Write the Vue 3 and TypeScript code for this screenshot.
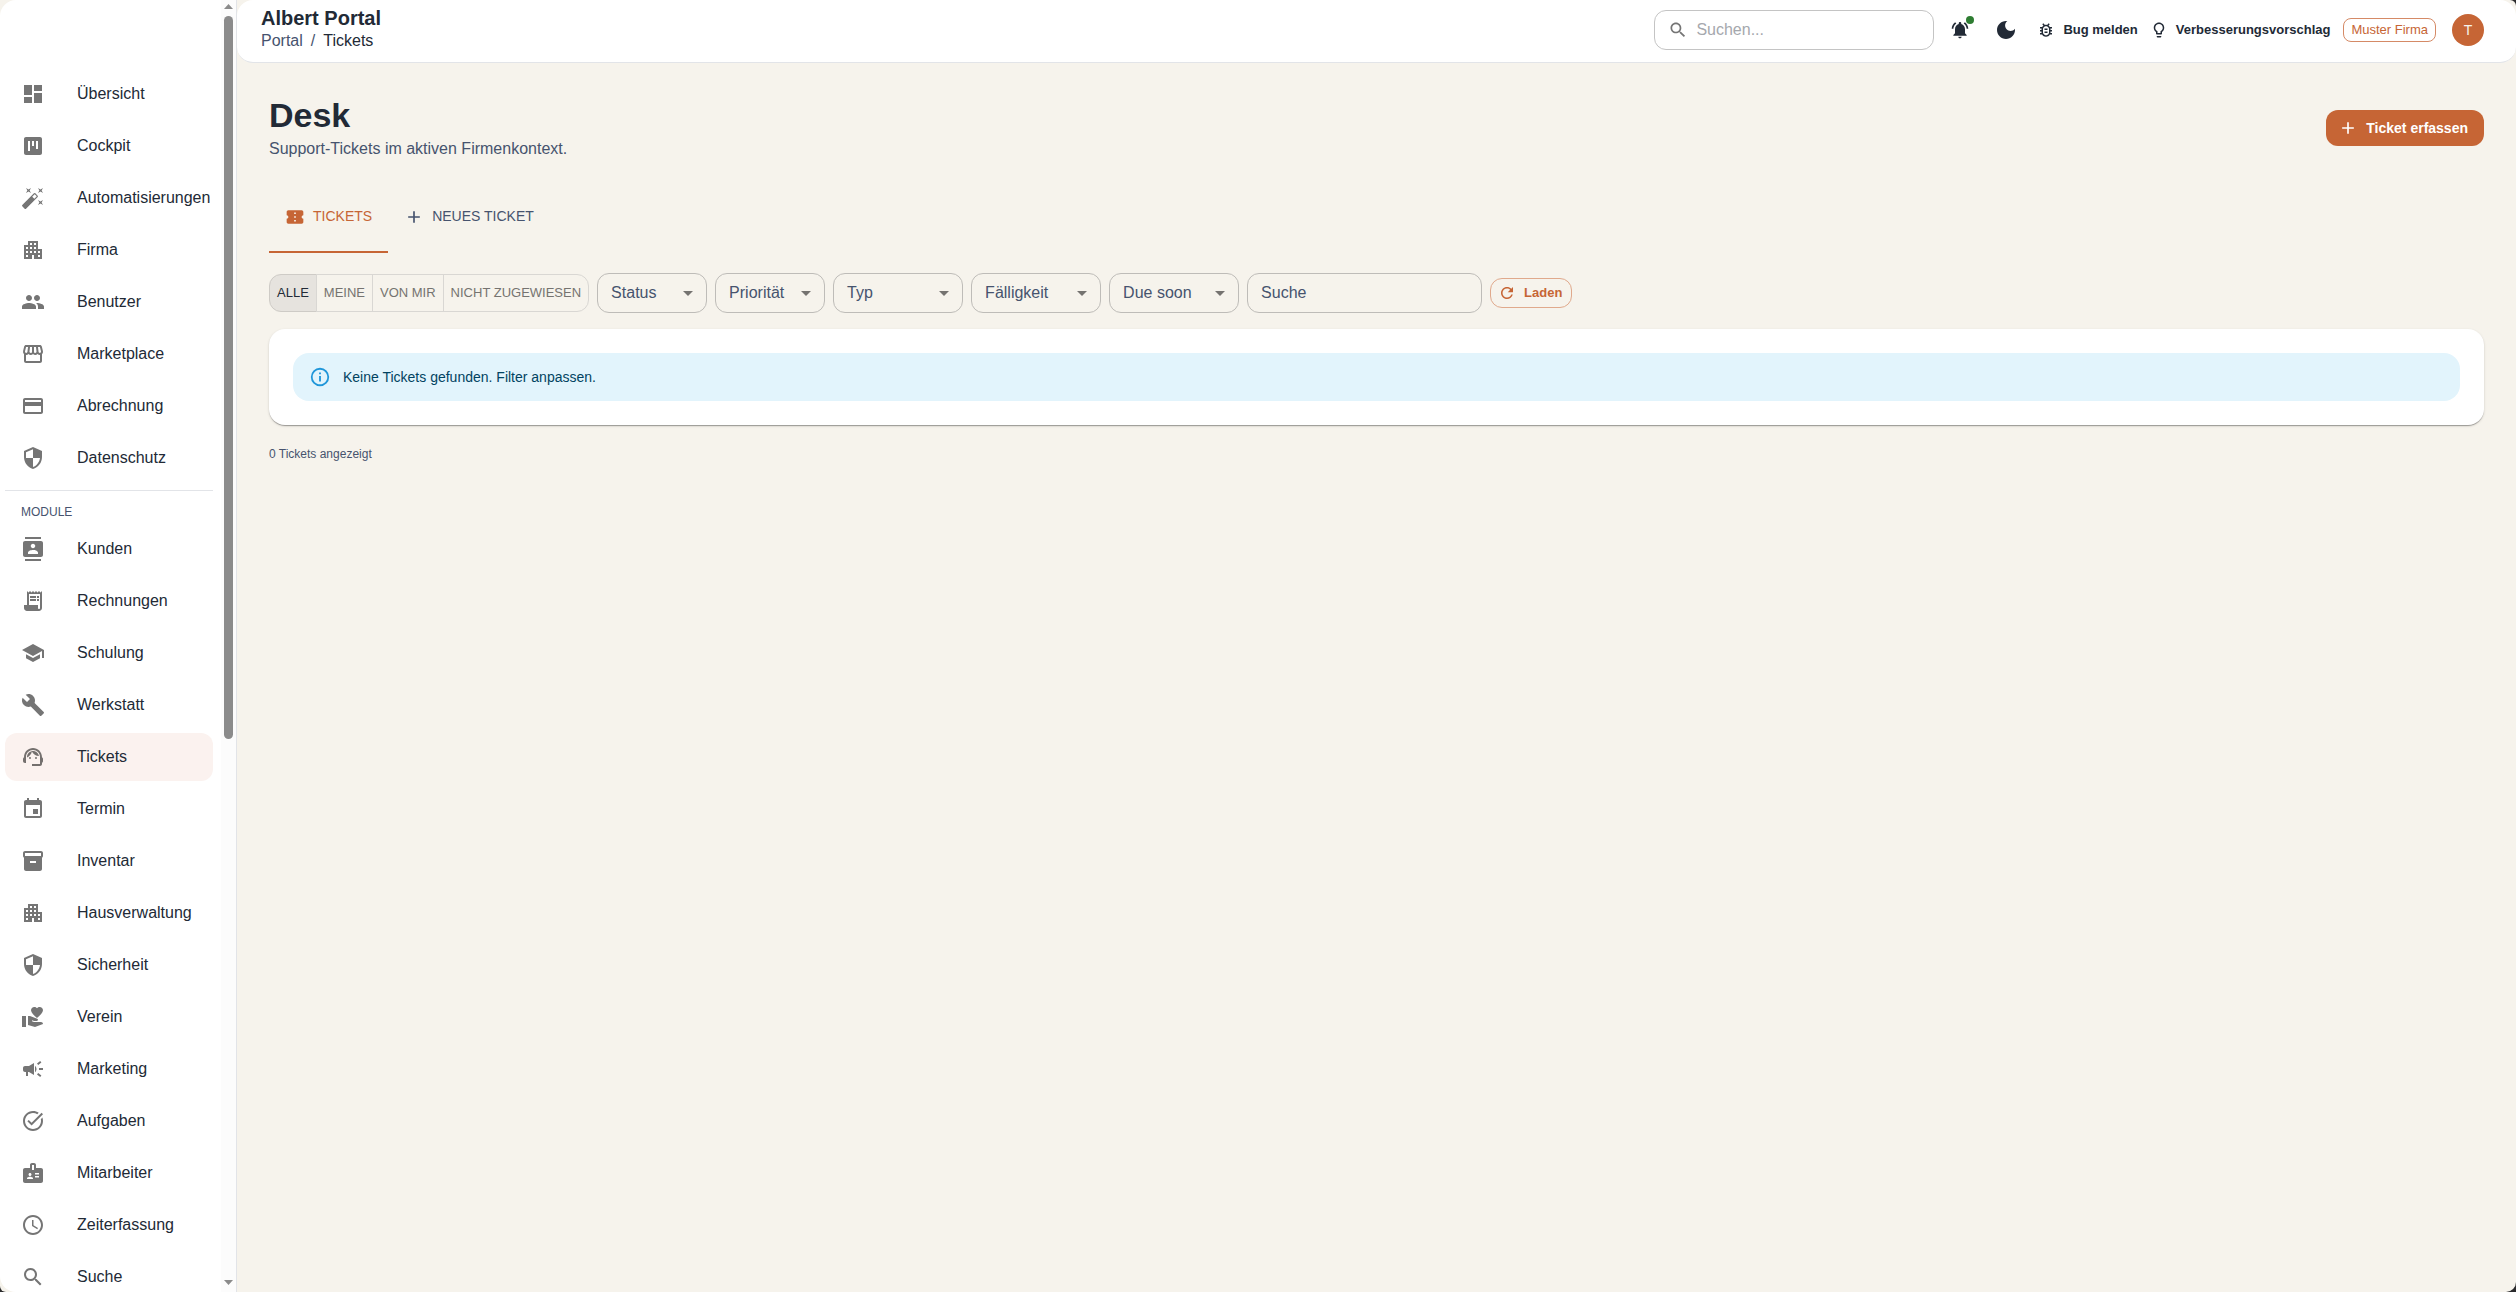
<script setup lang="ts">
interface NavItem {
  label: string
  icon: string
  active?: boolean
}

const icons: Record<string, string> = {
  dashboard: 'M3 13h8V3H3v10zm0 8h8v-6H3v6zm10 0h8V11h-8v10zm0-18v6h8V3h-8z',
  kanban: 'M19 3H5c-1.1 0-2 .9-2 2v14c0 1.1.9 2 2 2h14c1.1 0 2-.9 2-2V5c0-1.1-.9-2-2-2zM9 17H7V7h2v10zm4-5h-2V7h2v5zm4 3h-2V7h2v8z',
  wand: 'M7.5 5.6 10 7 8.6 4.5 10 2 7.5 3.4 5 2l1.4 2.5L5 7zm12 9.8L17 14l1.4 2.5L17 19l2.5-1.4L22 19l-1.4-2.5L22 14zM22 2l-2.5 1.4L17 2l1.4 2.5L17 7l2.5-1.4L22 7l-1.4-2.5zm-7.63 5.29a.9959.9959 0 0 0-1.41 0L1.29 18.96c-.39.39-.39 1.02 0 1.41l2.34 2.34c.39.39 1.02.39 1.41 0L16.7 11.05c.39-.39.39-1.02 0-1.41l-2.33-2.35zm-1.03 5.49-2.12-2.12 2.44-2.44 2.12 2.12-2.44 2.44z',
  apartment: 'M17 11V3H7v4H3v14h8v-4h2v4h8V11h-4zM7 19H5v-2h2v2zm0-4H5v-2h2v2zm0-4H5V9h2v2zm4 4H9v-2h2v2zm0-4H9V9h2v2zm0-4H9V5h2v2zm4 8h-2v-2h2v2zm0-4h-2V9h2v2zm0-4h-2V5h2v2zm4 12h-2v-2h2v2zm0-4h-2v-2h2v2z',
  people: 'M16 11c1.66 0 2.99-1.34 2.99-3S17.66 5 16 5c-1.66 0-3 1.34-3 3s1.34 3 3 3zm-8 0c1.66 0 2.99-1.34 2.99-3S9.66 5 8 5C6.34 5 5 6.34 5 8s1.34 3 3 3zm0 2c-2.33 0-7 1.17-7 3.5V19h14v-2.5c0-2.33-4.67-3.5-7-3.5zm8 0c-.29 0-.62.02-.97.05 1.16.84 1.97 1.97 1.97 3.45V19h6v-2.5c0-2.33-4.67-3.5-7-3.5z',
  storefront: 'M21.9 8.89l-1.05-4.37c-.22-.9-1-1.52-1.91-1.52H5.05c-.9 0-1.69.63-1.9 1.52L2.1 8.89c-.24 1.02-.02 2.06.62 2.88.08.11.19.19.28.29V19c0 1.1.9 2 2 2h14c1.1 0 2-.9 2-2v-6.94c.09-.09.2-.18.28-.28.64-.82.87-1.87.62-2.89zm-2.99-3.9l1.05 4.37c.1.42.01.84-.25 1.17-.14.18-.44.47-.94.47-.61 0-1.14-.49-1.21-1.14L16.98 5l1.93-.01zM13 5h1.96l.54 4.52c.05.39-.07.78-.33 1.07-.22.26-.54.41-.95.41-.67 0-1.22-.59-1.22-1.31V5zM8.49 9.52L9.04 5H11v4.69c0 .72-.55 1.31-1.29 1.31-.34 0-.65-.15-.89-.41-.25-.29-.37-.68-.33-1.07zm-4.45-.16L5.05 5h1.97l-.58 4.86c-.08.65-.6 1.14-1.21 1.14-.49 0-.8-.29-.93-.47-.27-.32-.36-.75-.26-1.17zM5 19v-6.03c.08.01.15.03.23.03.87 0 1.66-.36 2.24-.95.6.6 1.4.95 2.31.95.87 0 1.65-.36 2.23-.93.59.57 1.39.93 2.29.93.84 0 1.64-.35 2.24-.95.58.59 1.37.95 2.24.95.08 0 .15-.02.23-.03V19H5z',
  card: 'M20 4H4c-1.11 0-1.99.89-1.99 2L2 18c0 1.11.89 2 2 2h16c1.11 0 2-.89 2-2V6c0-1.11-.89-2-2-2zm0 14H4v-6h16v6zm0-10H4V6h16v2z',
  security: 'M12 1 3 5v6c0 5.55 3.84 10.74 9 12 5.16-1.26 9-6.45 9-12V5l-9-4zm0 10.99h7c-.53 4.12-3.28 7.79-7 8.94V12H5V6.3l7-3.11v8.8z',
  contacts: 'M20 0H4v2h16V0zM4 24h16v-2H4v2zM20 4H4c-1.1 0-2 .9-2 2v12c0 1.1.9 2 2 2h16c1.1 0 2-.9 2-2V6c0-1.1-.9-2-2-2zm-8 2.75c1.24 0 2.25 1.01 2.25 2.25s-1.01 2.25-2.25 2.25S9.75 10.24 9.75 9 10.76 6.75 12 6.75zM17 17H7v-1.5c0-1.67 3.33-2.5 5-2.5s5 .83 5 2.5V17z',
  receipt: 'M19.5 3.5 18 2l-1.5 1.5L15 2l-1.5 1.5L12 2l-1.5 1.5L9 2 7.5 3.5 6 2v14H3v3c0 1.66 1.34 3 3 3h12c1.66 0 3-1.34 3-3V2l-1.5 1.5zM19 19c0 .55-.45 1-1 1s-1-.45-1-1v-3H8V5h11v14zM9 7h6v2H9zm7 0h2v2h-2zm-7 3h6v2H9zm7 0h2v2h-2z',
  school: 'M5 13.18v4L12 21l7-3.82v-4L12 17l-7-3.82zM12 3 1 9l11 6 9-4.91V17h2V9L12 3z',
  build: 'm22.7 19-9.1-9.1c.9-2.3.4-5-1.5-6.9-2-2-5-2.4-7.4-1.3L9 6 6 9 1.6 4.7C.4 7.1.9 10.1 2.9 12.1c1.9 1.9 4.6 2.4 6.9 1.5l9.1 9.1c.4.4 1 .4 1.4 0l2.3-2.3c.5-.4.5-1.1.1-1.4z',
  agent: 'M21 12.22C21 6.73 16.74 3 12 3c-4.69 0-9 3.65-9 9.28-.6.34-1 .98-1 1.72v2c0 1.1.9 2 2 2h1v-6.1c0-3.87 3.13-7 7-7s7 3.13 7 7V19h-8v2h8c1.1 0 2-.9 2-2v-1.22c.59-.31 1-.92 1-1.64v-2.3c0-.7-.41-1.31-1-1.62zM8 13a1 1 0 1 0 2 0a1 1 0 1 0-2 0zM14 13a1 1 0 1 0 2 0a1 1 0 1 0-2 0zM18 11.03C17.52 8.18 15.04 6 12.05 6c-3.03 0-6.29 2.51-6.03 6.45 2.47-1.01 4.33-3.21 4.86-5.89 1.31 2.63 4 4.44 7.12 4.47z',
  event: 'M17 12h-5v5h5v-5zM16 1v2H8V1H6v2H5c-1.11 0-1.99.9-1.99 2L3 19c0 1.1.89 2 2 2h14c1.1 0 2-.9 2-2V5c0-1.1-.9-2-2-2h-1V1h-2zm3 18H5V8h14v11z',
  inventory: 'M20 2H4c-1 0-2 .9-2 2v3.01c0 .72.43 1.34 1 1.69V20c0 1.1 1.1 2 2 2h14c.9 0 2-.9 2-2V8.7c.57-.35 1-.97 1-1.69V4c0-1.1-1-2-2-2zm-5 12H9v-2h6v2zm5-7H4V4h16v3z',
  volunteer: 'M1 11h4v11H1zM16 3.25C16.65 2.49 17.66 2 18.7 2 20.55 2 22 3.45 22 5.3c0 2.27-2.91 4.9-6 7.7-3.09-2.81-6-5.44-6-7.7C10 3.45 11.45 2 13.3 2c1.04 0 2.05.49 2.7 1.25zM20 17h-7l-2.09-.73.33-.94L13 16h2.82c.65 0 1.18-.53 1.18-1.18 0-.49-.31-.93-.77-1.11L8.97 11H7v9.02L14 22l8.01-3c-.01-1.1-.9-2-2.01-2z',
  campaign: 'M18 11v2h4v-2h-4zm-2 6.61c.96.71 2.21 1.65 3.2 2.39.4-.53.8-1.07 1.2-1.6-.99-.74-2.24-1.68-3.2-2.4-.4.54-.8 1.08-1.2 1.61zM20.4 5.6c-.4-.53-.8-1.07-1.2-1.6-.99.74-2.24 1.68-3.2 2.4.4.53.8 1.07 1.2 1.6.96-.72 2.21-1.65 3.2-2.4zM4 9c-1.1 0-2 .9-2 2v2c0 1.1.9 2 2 2h1v4h2v-4h1l5 3V6L8 9H4zm11.5 3c0-1.33-.58-2.53-1.5-3.35v6.69c.92-.81 1.5-2.01 1.5-3.34z',
  task: 'M22 5.18 10.59 16.6l-4.24-4.24 1.41-1.41 2.83 2.83 10-10L22 5.18zm-2.21 5.04c.13.57.21 1.17.21 1.78 0 4.42-3.58 8-8 8s-8-3.58-8-8 3.58-8 8-8c1.58 0 3.04.46 4.28 1.25l1.44-1.44C16.1 2.67 14.13 2 12 2 6.48 2 2 6.48 2 12s4.48 10 10 10 10-4.48 10-10c0-1.19-.22-2.33-.6-3.39l-1.61 1.61z',
  badge: 'M20 7h-5V4c0-1.1-.9-2-2-2h-2c-1.1 0-2 .9-2 2v3H4c-1.1 0-2 .9-2 2v11c0 1.1.9 2 2 2h16c1.1 0 2-.9 2-2V9c0-1.1-.9-2-2-2zM9 12c.83 0 1.5.67 1.5 1.5S9.83 15 9 15s-1.5-.67-1.5-1.5S8.17 12 9 12zm3 6H6v-.75c0-1 2-1.5 3-1.5s3 .5 3 1.5V18zm1-9h-2V4h2v5zm5 7.5h-4V15h4v1.5zm0-3h-4V12h4v1.5z',
  clock: 'M11.99 2C6.47 2 2 6.48 2 12s4.47 10 9.99 10C17.52 22 22 17.52 22 12S17.52 2 11.99 2zM12 20c-4.42 0-8-3.58-8-8s3.58-8 8-8 8 3.58 8 8-3.58 8-8 8zm.5-13H11v6l5.25 3.15.75-1.23-4.5-2.67z',
  search: 'M15.5 14h-.79l-.28-.27C15.41 12.59 16 11.11 16 9.5 16 5.91 13.09 3 9.5 3S3 5.91 3 9.5 5.91 16 9.5 16c1.61 0 3.09-.59 4.23-1.57l.27.28v.79l5 4.99L20.49 19l-4.99-5zm-6 0C7.01 14 5 11.99 5 9.5S7.01 5 9.5 5 14 7.01 14 9.5 11.99 14 9.5 14z',
  bell: 'M7.58 4.08 6.15 2.65C3.75 4.48 2.17 7.3 2.03 10.5h2c.15-2.65 1.51-4.97 3.55-6.42zm12.39 6.42h2c-.15-3.2-1.73-6.02-4.12-7.85l-1.42 1.43c2.02 1.45 3.39 3.77 3.54 6.42zM18 11c0-3.07-1.64-5.64-4.5-6.32V4c0-.83-.67-1.5-1.5-1.5s-1.5.67-1.5 1.5v.68C7.63 5.36 6 7.92 6 11v5l-2 2v1h16v-1l-2-2v-5zm-6 11c.14 0 .27-.01.4-.04.65-.14 1.18-.58 1.44-1.18.1-.24.15-.5.15-.78h-4c.01 1.1.9 2 2.01 2z',
  moon: 'M12 3c-4.97 0-9 4.03-9 9s4.03 9 9 9 9-4.03 9-9c0-.46-.04-.92-.1-1.36-.98 1.37-2.58 2.26-4.4 2.26-2.98 0-5.4-2.42-5.4-5.4 0-1.81.89-3.42 2.26-4.4-.44-.06-.9-.1-1.36-.1z',
  bug: 'M20 8h-2.81c-.45-.78-1.07-1.45-1.82-1.96L17 4.41 15.59 3l-2.17 2.17C12.96 5.06 12.49 5 12 5s-.96.06-1.41.17L8.41 3 7 4.41l1.62 1.63C7.88 6.55 7.26 7.22 6.81 8H4v2h2.09c-.05.33-.09.66-.09 1v1H4v2h2v1c0 .34.04.67.09 1H4v2h2.81c1.04 1.79 2.97 3 5.19 3s4.15-1.21 5.19-3H20v-2h-2.09c.05-.33.09-.66.09-1v-1h2v-2h-2v-1c0-.34-.04-.67-.09-1H20V8zm-4 4v3c0 .22-.03.47-.07.7l-.1.65-.37.65c-.72 1.24-2.04 2-3.46 2s-2.74-.77-3.46-2l-.37-.64-.1-.65C8.03 15.48 8 15.23 8 15v-4c0-.23.03-.48.07-.7l.1-.65.37-.65c.3-.52.72-.97 1.21-1.31l.57-.39.74-.18c.31-.08.63-.12.94-.12.32 0 .63.04.95.12l.68.16.61.42c.5.34.91.78 1.21 1.31l.38.65.1.65c.04.22.07.47.07.69v1zm-6 2h4v2h-4zm0-4h4v2h-4z',
  bulb: 'M9 21c0 .55.45 1 1 1h4c.55 0 1-.45 1-1v-1H9v1zm3-19C8.14 2 5 5.14 5 9c0 2.38 1.19 4.47 3 5.74V17c0 .55.45 1 1 1h6c.55 0 1-.45 1-1v-2.26c1.81-1.27 3-3.36 3-5.74 0-3.86-3.14-7-7-7zm2.85 11.1-.85.6V16h-4v-2.3l-.85-.6C7.8 12.16 7 10.63 7 9c0-2.76 2.24-5 5-5s5 2.24 5 5c0 1.63-.8 3.16-2.15 4.1z',
  ticket: 'M22 10V6c0-1.11-.9-2-2-2H4c-1.1 0-1.99.89-1.99 2v4c1.1 0 1.99.9 1.99 2s-.89 2-2 2v4c0 1.1.9 2 2 2h16c1.1 0 2-.9 2-2v-4c-1.1 0-2-.9-2-2s.9-2 2-2zm-9 7.5h-2v-2h2v2zm0-4.5h-2v-2h2v2zm0-4.5h-2v-2h2v2z',
  add: 'M19 13h-6v6h-2v-6H5v-2h6V5h2v6h6v2z',
  info: 'M11 9h2V7h-2M12 20c-4.41 0-8-3.59-8-8s3.59-8 8-8 8 3.59 8 8-3.59 8-8 8m0-18A10 10 0 0 0 2 12a10 10 0 0 0 10 10 10 10 0 0 0 10-10A10 10 0 0 0 12 2m-1 15h2v-6h-2v6z',
  refresh: 'M17.65 6.35C16.2 4.9 14.21 4 12 4c-4.42 0-7.99 3.58-7.99 8s3.57 8 7.99 8c3.73 0 6.84-2.55 7.73-6h-2.08c-.82 2.33-3.04 4-5.65 4-3.31 0-6-2.69-6-6s2.69-6 6-6c1.66 0 3.14.69 4.22 1.78L13 11h7V4l-2.35 2.35z',
  dropdown: 'M7 10l5 5 5-5z',
}

const mainNav: NavItem[] = [
  { label: 'Übersicht', icon: 'dashboard' },
  { label: 'Cockpit', icon: 'kanban' },
  { label: 'Automatisierungen', icon: 'wand' },
  { label: 'Firma', icon: 'apartment' },
  { label: 'Benutzer', icon: 'people' },
  { label: 'Marketplace', icon: 'storefront' },
  { label: 'Abrechnung', icon: 'card' },
  { label: 'Datenschutz', icon: 'security' },
]

const moduleNav: NavItem[] = [
  { label: 'Kunden', icon: 'contacts' },
  { label: 'Rechnungen', icon: 'receipt' },
  { label: 'Schulung', icon: 'school' },
  { label: 'Werkstatt', icon: 'build' },
  { label: 'Tickets', icon: 'agent', active: true },
  { label: 'Termin', icon: 'event' },
  { label: 'Inventar', icon: 'inventory' },
  { label: 'Hausverwaltung', icon: 'apartment' },
  { label: 'Sicherheit', icon: 'security' },
  { label: 'Verein', icon: 'volunteer' },
  { label: 'Marketing', icon: 'campaign' },
  { label: 'Aufgaben', icon: 'task' },
  { label: 'Mitarbeiter', icon: 'badge' },
  { label: 'Zeiterfassung', icon: 'clock' },
  { label: 'Suche', icon: 'search' },
]

const scopes: string[] = ['Alle', 'Meine', 'Von mir', 'Nicht zugewiesen']

const selects: { label: string; narrow: boolean }[] = [
  { label: 'Status', narrow: true },
  { label: 'Priorität', narrow: true },
  { label: 'Typ', narrow: false },
  { label: 'Fälligkeit', narrow: false },
  { label: 'Due soon', narrow: false },
]
</script>

<template>
  <div class="app">
    <aside class="sidebar">
      <nav class="nav">
        <div v-for="item in mainNav" :key="item.label" class="nav-item">
          <svg class="i24" viewBox="0 0 24 24"><path :d="icons[item.icon]" /></svg>
          <span>{{ item.label }}</span>
        </div>
        <div class="divider"></div>
        <div class="nav-heading">MODULE</div>
        <div v-for="item in moduleNav" :key="item.label" class="nav-item" :class="{ active: item.active }">
          <svg class="i24" viewBox="0 0 24 24"><path :d="icons[item.icon]" /></svg>
          <span>{{ item.label }}</span>
        </div>
      </nav>
      <div class="scrollbar">
        <svg class="arrow" viewBox="0 0 15 16"><path d="M3 9h9L7.5 4z" /></svg>
        <div class="thumb"></div>
        <svg class="arrow end" viewBox="0 0 15 16"><path d="M3 4h9l-4.500 5z" /></svg>
      </div>
    </aside>

    <div class="main">
      <header class="topbar">
        <div class="brand">
          <div class="brand-name">Albert Portal</div>
          <div class="crumbs"><span>Portal</span><span class="sep">/</span><span class="here">Tickets</span></div>
        </div>
        <div class="search">
          <svg class="i20" viewBox="0 0 24 24"><path :d="icons.search" /></svg>
          <span>Suchen...</span>
        </div>
        <button class="icon-btn small">
          <svg class="i20" viewBox="0 0 24 24"><path :d="icons.bell" /></svg>
          <i class="dot"></i>
        </button>
        <button class="icon-btn"><svg class="i24" viewBox="0 0 24 24"><path :d="icons.moon" /></svg></button>
        <button class="text-btn bug">
          <svg class="i18" viewBox="0 0 24 24"><path :d="icons.bug" /></svg><span>Bug melden</span>
        </button>
        <button class="text-btn idea">
          <svg class="i18" viewBox="0 0 24 24"><path :d="icons.bulb" /></svg><span>Verbesserungsvorschlag</span>
        </button>
        <div class="chip">Muster Firma</div>
        <div class="avatar">T</div>
      </header>

      <main class="content">
        <div class="page-head">
          <div>
            <h1>Desk</h1>
            <p>Support-Tickets im aktiven Firmenkontext.</p>
          </div>
          <button class="primary">
            <svg class="i20" viewBox="0 0 24 24"><path :d="icons.add" /></svg><span>Ticket erfassen</span>
          </button>
        </div>

        <div class="tabs">
          <div class="tab selected">
            <svg class="i20" viewBox="0 0 24 24"><path :d="icons.ticket" /></svg><span>TICKETS</span>
          </div>
          <div class="tab">
            <svg class="i20" viewBox="0 0 24 24"><path :d="icons.add" /></svg><span>NEUES TICKET</span>
          </div>
        </div>

        <div class="filters">
          <div class="toggles">
            <button v-for="(s, i) in scopes" :key="s" class="toggle" :class="{ on: i === 0 }">{{ s }}</button>
          </div>
          <div v-for="s in selects" :key="s.label" class="field" :class="{ narrow: s.narrow }">
            <span>{{ s.label }}</span>
            <svg class="i24" viewBox="0 0 24 24"><path :d="icons.dropdown" /></svg>
          </div>
          <div class="field wide"><span>Suche</span></div>
          <button class="reload">
            <svg class="i18" viewBox="0 0 24 24"><path :d="icons.refresh" /></svg><span>Laden</span>
          </button>
        </div>

        <section class="card">
          <div class="alert">
            <svg class="i22" viewBox="0 0 24 24"><path :d="icons.info" /></svg>
            <span>Keine Tickets gefunden. Filter anpassen.</span>
          </div>
        </section>
        <div class="count">0 Tickets angezeigt</div>
      </main>
    </div>
  </div>
</template>

<style>
body {
  background: #2b2b2d;
  overflow: hidden;
}
</style>

<style scoped>
.app {
  display: flex;
  height: 1292px;
  overflow: hidden;
  background: #f6f3ec;
  border-radius: 0 6px 10px 6px;
  color: #222a36;
  font-family: "Liberation Sans", Arial, sans-serif;
  font-size: 16px;
  line-height: 24px;
}
.app * {
  box-sizing: border-box;
}
svg {
  display: block;
  flex: none;
  fill: currentColor;
}
.i18 { width: 18px; height: 18px; }
.i20 { width: 20px; height: 20px; }
.i22 { width: 22px; height: 22px; }
.i24 { width: 24px; height: 24px; }
button {
  margin: 0;
  padding: 0;
  border: 0;
  background: none;
  color: inherit;
  font: inherit;
}
.sidebar {
  display: flex;
  flex: none;
  width: 237px;
  height: 1292px;
  overflow: hidden;
  background: #fff;
  border-right: 1px solid #e2e4e8;
  border-radius: 16px 0 0 16px;
}
.nav {
  width: 221px;
  padding: 70px 8px 0 5px;
}
.nav-item {
  display: flex;
  align-items: center;
  gap: 32px;
  height: 48px;
  margin-bottom: 4px;
  padding-left: 16px;
  border-radius: 12px;
  white-space: nowrap;
}
.nav-item svg {
  color: #757575;
}
.nav-item.active {
  background: #fbf2ef;
}
.nav-item.active svg {
  color: #74706e;
}
.divider {
  height: 1px;
  margin-top: 8px;
  background: #e2e4e8;
}
.nav-heading {
  height: 34px;
  padding: 11px 16px 0;
  color: #46536e;
  font-size: 12px;
  line-height: 20px;
}
.scrollbar {
  display: flex;
  flex-direction: column;
  width: 15px;
  background: #fcfcfc;
  color: #8b8b8b;
}
.arrow {
  width: 15px;
  height: 16px;
}
.arrow.end {
  margin-top: auto;
}
.thumb {
  width: 9px;
  height: 723px;
  margin-left: 3px;
  border-radius: 5px;
  background: #8b8b8b;
}
.main {
  flex: 1;
  min-width: 0;
}
.topbar {
  display: flex;
  align-items: center;
  height: 63px;
  padding: 0 32px 2px 24px;
  background: #fff;
  border-bottom: 1px solid #e2e4e8;
  border-radius: 16px;
}
.brand {
  margin-right: auto;
}
.brand-name {
  font-size: 20px;
  font-weight: 700;
  line-height: 22px;
}
.crumbs {
  display: flex;
  gap: 8px;
  color: #46536e;
}
.here {
  color: #222a36;
}
.search {
  display: flex;
  align-items: center;
  gap: 8px;
  width: 280px;
  height: 40px;
  padding-left: 13px;
  border: 1px solid #c4c4c4;
  border-radius: 12px;
  color: #a5a8ad;
}
.search svg {
  color: #757575;
}
.icon-btn {
  position: relative;
  display: flex;
  align-items: center;
  justify-content: center;
  width: 40px;
  height: 40px;
  margin-left: 8px;
}
.icon-btn.small {
  width: 36px;
  height: 36px;
}
.dot {
  position: absolute;
  top: 4px;
  left: 24px;
  width: 8px;
  height: 8px;
  border-radius: 50%;
  background: #2e7d32;
}
.text-btn {
  display: flex;
  align-items: center;
  gap: 8px;
  font-size: 13px;
  font-weight: 700;
}
.bug {
  margin-left: 11px;
}
.idea {
  margin: 0 13px 0 12px;
}
.chip {
  height: 24px;
  padding: 0 7px;
  border: 1px solid #d58a66;
  border-radius: 8px;
  color: #c66535;
  font-size: 13px;
  line-height: 22px;
}
.avatar {
  width: 32px;
  height: 32px;
  margin-left: 16px;
  border-radius: 50%;
  background: #c66535;
  color: #f6f3ec;
  font-size: 14px;
  line-height: 32px;
  text-align: center;
}
.content {
  padding: 31px 32px 0;
}
.page-head {
  display: flex;
  align-items: center;
  justify-content: space-between;
}
h1 {
  margin: 0;
  font-size: 34px;
  font-weight: 700;
  line-height: 42px;
}
p {
  margin: 1px 0;
  color: #46536e;
}
.primary {
  display: flex;
  align-items: center;
  gap: 8px;
  height: 36px;
  padding: 0 16px 0 12px;
  border-radius: 12px;
  background: #c66535;
  color: #fff;
  font-size: 14px;
  font-weight: 700;
}
.tabs {
  display: flex;
  margin-top: 19px;
}
.tab {
  display: flex;
  align-items: center;
  gap: 8px;
  height: 72px;
  padding: 0 16px;
  color: #46536e;
  font-size: 14px;
}
.tab span {
  padding-bottom: 2px;
}
.tab.selected {
  color: #c66535;
  box-shadow: inset 0 -2px #c66535;
}
.filters {
  display: flex;
  align-items: center;
  gap: 8px;
  margin-top: 20px;
}
.toggles {
  display: flex;
}
.toggle {
  height: 38px;
  margin-left: -1px;
  padding: 0 7px;
  border: 1px solid #d9d7d3;
  color: #757370;
  font-size: 13px;
  text-transform: uppercase;
}
.toggle:first-child {
  margin-left: 0;
  border-radius: 12px 0 0 12px;
}
.toggle:last-child {
  border-radius: 0 12px 12px 0;
}
.toggle.on {
  background: #e6e3de;
  border-color: #cecbc6;
  color: #222a36;
}
.field {
  display: flex;
  align-items: center;
  justify-content: space-between;
  width: 130px;
  height: 40px;
  padding: 0 6px 0 13px;
  border: 1px solid #bebcb8;
  border-radius: 12px;
  color: #46536e;
}
.field svg {
  color: #757370;
}
.field.narrow {
  width: 110px;
}
.field.wide {
  width: 235px;
}
.reload {
  display: flex;
  align-items: center;
  gap: 8px;
  height: 30px;
  padding: 0 9px 0 7px;
  border: 1px solid #e0a98c;
  border-radius: 12px;
  color: #c66535;
  font-size: 13px;
  font-weight: 700;
}
.card {
  margin-top: 16px;
  padding: 24px;
  border-radius: 16px;
  background: #fff;
  box-shadow: 0 2px 1px -1px rgba(0, 0, 0, 0.2), 0 1px 1px rgba(0, 0, 0, 0.14), 0 1px 3px rgba(0, 0, 0, 0.12);
}
.alert {
  display: flex;
  align-items: center;
  gap: 12px;
  height: 48px;
  padding-left: 16px;
  border-radius: 16px;
  background: #e2f4fc;
  color: #014361;
  font-size: 14px;
}
.alert svg {
  color: #1f96d9;
}
.count {
  margin-top: 19px;
  color: #46536e;
  font-size: 12px;
  line-height: 20px;
}
</style>
